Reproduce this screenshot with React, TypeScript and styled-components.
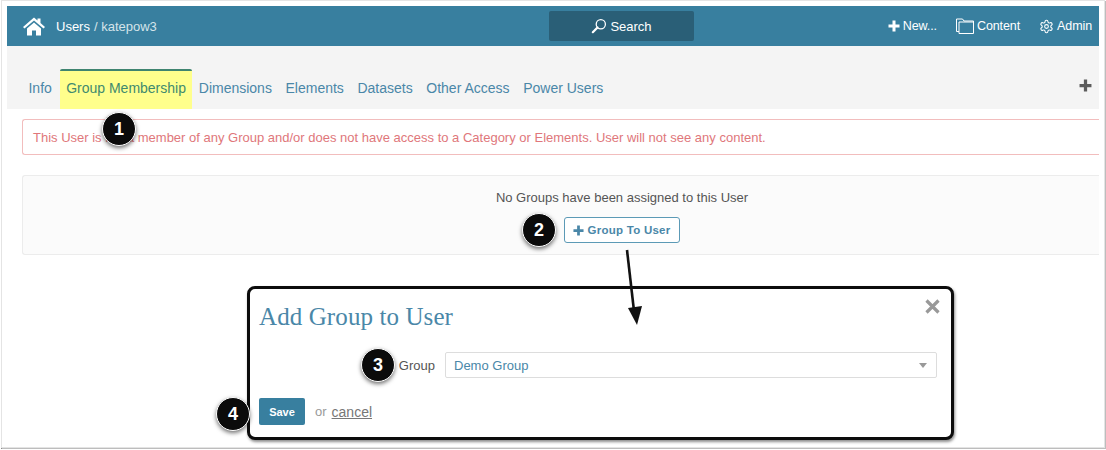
import React from "react";
import styled, { createGlobalStyle } from "styled-components";

const Global = createGlobalStyle`
  html, body { margin: 0; padding: 0; background: #fff; }
  body { font-family: "Liberation Sans", Arial, sans-serif; width: 1106px; height: 450px; overflow: hidden; }
`;
const Stage = styled.div`
  position: relative; width: 1106px; height: 450px; overflow: hidden; padding: 1px 0 0 2px; box-sizing: border-box;
`;
const Outer = styled.div`
  width: 1102px; height: 446px; box-sizing: border-box; padding: 5px 5px 0 5px; background: #fff;
  box-shadow: 0 0 0 1px #e4e4e4, 1px 1px 0 1px #bdbdbd, 0 1px 0 1px #8d8d8d;
`;
const Frame = styled.div`
  width: 1092px; height: 440px; background: #fff; overflow: hidden;
`;
const Header = styled.header`
  height: 40px; background: #387f9f; display: grid; grid-template-columns: 542px 145px 1fr; align-items: center; color: #fff;
`;
const Crumbs = styled.div`
  display: flex; align-items: center; padding-left: 16px; font-size: 13px; color: #fff;
`;
const Muted = styled.span`
  color: #d5e4ea; margin-left: 4px;
`;
const HomeIcon = styled.svg`
  width: 22px; height: 19px; margin-right: 11px; fill: #fff; flex: none;
`;
const SearchBtn = styled.div`
  height: 30px; width: 145px; border-radius: 2px; background: #2a5f77; display: flex; align-items: center; justify-content: center; gap: 3px; font-size: 13px; color: #fff;
`;
const Actions = styled.nav`
  display: flex; justify-content: flex-end; align-items: center; gap: 19px; padding-right: 7px; font-size: 12.5px; letter-spacing: -0.1px;
`;
const Action = styled.span`
  display: flex; align-items: center; gap: 3px; color: #fff;
`;
const TabStrip = styled.div`
  height: 63px; background: #f4f4f4; display: flex; align-items: flex-end; padding-left: 14.7px; box-sizing: border-box; position: relative;
`;
const Tab = styled.div<{ $active?: boolean }>`
  height: ${(p) => (p.$active ? "40px" : "37px")};
  padding: 0 ${(p) => (p.$active ? "6px" : "6.8px")} 5px;
  display: flex; align-items: center; font-size: 14px; box-sizing: border-box;
  color: ${(p) => (p.$active ? "#3f8a6f" : "#4a87a8")};
  background: ${(p) => (p.$active ? "#ffff8c" : "transparent")};
  border-top: ${(p) => (p.$active ? "2px solid #3f8470" : "none")};
  border-radius: 2px 2px 0 0;
  margin-left: ${(p) => (p.$active ? "1.5px" : "0")};
`;
const PlusCorner = styled.svg`
  position: absolute; right: 7px; top: 33px; width: 13px; height: 13px; fill: #5c5c5c;
`;
const Content = styled.main`
  padding: 10px 0 0 15px; display: flex; flex-direction: column;
`;
const Alert = styled.div`
  height: 36px; box-sizing: border-box; border: 1px solid #f2bdbd; border-right: none; border-radius: 3px 0 0 3px; display: flex; align-items: center; padding-left: 10px; font-size: 13px; color: #e0777b; background: #fff; white-space: nowrap;
`;
const Panel = styled.section`
  margin-top: 20px; height: 80px; box-sizing: border-box; border: 1px solid #ececec; border-right: none; border-radius: 3px 0 0 3px; background: #fbfbfb; display: flex; flex-direction: column; align-items: center; padding-top: 14px; gap: 12px;
`;
const PanelText = styled.div`
  font-size: 13px; color: #555; line-height: 15px; margin-left: 122px;
`;
const GroupBtn = styled.div`
  width: 116px; height: 26px; box-sizing: border-box; margin-left: 121px; border: 1px solid #5c9ab6; border-radius: 3px; background: #fff; display: flex; align-items: center; justify-content: center; gap: 4px; font-size: 11.5px; font-weight: 700; color: #4a87a8; letter-spacing: 0.25px;
`;
const Modal = styled.section`
  margin: 31px 0 0 225px; width: 707px; height: 154px; box-sizing: border-box; position: relative; border: 3px solid #0c0c0c; border-radius: 8px; background: #fff; padding: 13px 14px 0 9px; box-shadow: 1px 2px 3px rgba(0,0,0,0.45);
`;
const ModalTitle = styled.h2`
  margin: 0; font-family: "Liberation Serif", "DejaVu Serif", serif; font-weight: 400; font-size: 25px; line-height: 30px; color: #4a87a8; letter-spacing: 0.1px;
`;
const Close = styled.svg`
  position: absolute; right: 11px; top: 10px; width: 15px; height: 15px; stroke: #999; stroke-width: 3.2; fill: none;
`;
const FormRow = styled.div`
  display: flex; align-items: center; margin-top: 20px; justify-content: flex-end;
`;
const Label = styled.label`
  font-size: 13px; color: #555; margin-right: 10px;
`;
const Select = styled.div`
  width: 492px; height: 26px; box-sizing: border-box; border: 1px solid #ddd; border-radius: 2px; display: flex; align-items: center; justify-content: space-between; padding: 0 9px 0 8px; font-size: 13px; color: #4a87a8;
`;
const Caret = styled.i`
  width: 0; height: 0; border-left: 4.5px solid transparent; border-right: 4.5px solid transparent; border-top: 5px solid #999;
`;
const Footer = styled.div`
  display: flex; align-items: center; margin-top: 20px; font-size: 13px; color: #999;
`;
const SaveBtn = styled.div`
  width: 46px; height: 27px; border-radius: 2px; background: #387f9f; color: #fff; font-size: 11px; font-weight: 700; display: flex; align-items: center; justify-content: center; margin-right: 10px;
`;
const Cancel = styled.span`
  color: #777; text-decoration: underline; margin-left: 5px; font-size: 14px;
`;
const Badge = styled.div<{ $x: number; $y: number }>`
  position: absolute; left: ${(p) => p.$x}px; top: ${(p) => p.$y}px; width: 34px; height: 34px; box-sizing: border-box; border: 1.5px solid #fff; border-radius: 50%; background: #0b0b0b; color: #fff; font-size: 18px; font-weight: 700; display: flex; align-items: center; justify-content: center; box-shadow: 0 2px 4px rgba(0,0,0,0.55);
`;
const Arrow = styled.svg`
  position: absolute; left: 620px; top: 245px; width: 26px; height: 85px;
`;

function Plus({ size = 12, color = "#fff" }: { size?: number; color?: string }) {
  return (
    <svg width={size} height={size} viewBox="0 0 12 12" fill={color} style={{ flex: "none" }}>
      <path d="M4.5 0.5h3v4h4v3h-4v4h-3v-4h-4v-3h4z" />
    </svg>
  );
}

export default function App() {
  return (
    <Stage>
      <Global />
      <Outer>
        <Frame>
          <Header>
            <Crumbs>
              <HomeIcon viewBox="0 0 22 19">
                <path d="M11 0.5 L14.5 3.5 V1.5 H17.5 V6 L22 10 L20.5 11.5 L11 3.5 L1.5 11.5 L0 10 Z" />
                <path d="M4 11.5 L11 5.5 L18 11.5 V18.5 H13 V13.5 H9 V18.5 H4 Z" />
              </HomeIcon>
              Users <Muted>/ katepow3</Muted>
            </Crumbs>
            <SearchBtn>
              <svg width="16" height="16" viewBox="0 0 16 16" fill="none" stroke="#fff">
                <circle cx="9.8" cy="6.2" r="4.6" strokeWidth="1.3" />
                <path d="M6.5 9.5 L1.8 14.2" strokeWidth="2.2" strokeLinecap="round" />
              </svg>
              Search
            </SearchBtn>
            <Actions>
              <Action>
                <Plus />
                New...
              </Action>
              <Action>
                <svg width="18" height="16" viewBox="0 0 18 16" fill="none" stroke="#fff" strokeWidth="1">
                  <path d="M3 13.5 H0.5 V1 H6.5 L8 3 H17.5 V15.5 H3 V4 H17.5" />
                </svg>
                Content
              </Action>
              <Action>
                <svg width="15" height="15" viewBox="0 0 24 24" fill="none" stroke="#fff" strokeWidth="1.7" strokeLinecap="round" strokeLinejoin="round">
                  <path d="M12.22 2h-.44a2 2 0 0 0-2 2v.18a2 2 0 0 1-1 1.73l-.43.25a2 2 0 0 1-2 0l-.15-.08a2 2 0 0 0-2.73.73l-.22.38a2 2 0 0 0 .73 2.73l.15.1a2 2 0 0 1 1 1.72v.51a2 2 0 0 1-1 1.74l-.15.09a2 2 0 0 0-.73 2.73l.22.38a2 2 0 0 0 2.73.73l.15-.08a2 2 0 0 1 2 0l.43.25a2 2 0 0 1 1 1.73V20a2 2 0 0 0 2 2h.44a2 2 0 0 0 2-2v-.18a2 2 0 0 1 1-1.73l.43-.25a2 2 0 0 1 2 0l.15.08a2 2 0 0 0 2.73-.73l.22-.39a2 2 0 0 0-.73-2.73l-.15-.08a2 2 0 0 1-1-1.74v-.5a2 2 0 0 1 1-1.74l.15-.09a2 2 0 0 0 .73-2.73l-.22-.38a2 2 0 0 0-2.73-.73l-.15.08a2 2 0 0 1-2 0l-.43-.25a2 2 0 0 1-1-1.73V4a2 2 0 0 0-2-2z" />
                  <circle cx="12" cy="12" r="3" />
                </svg>
                Admin
              </Action>
            </Actions>
          </Header>
          <TabStrip>
            <Tab>Info</Tab>
            <Tab $active>Group Membership</Tab>
            <Tab>Dimensions</Tab>
            <Tab>Elements</Tab>
            <Tab>Datasets</Tab>
            <Tab>Other Access</Tab>
            <Tab>Power Users</Tab>
            <PlusCorner viewBox="0 0 12 12">
              <path d="M4.5 0.5h3v4h4v3h-4v4h-3v-4h-4v-3h4z" />
            </PlusCorner>
          </TabStrip>
          <Content>
            <Alert>This User is not a member of any Group and/or does not have access to a Category or Elements. User will not see any content.</Alert>
            <Panel>
              <PanelText>No Groups have been assigned to this User</PanelText>
              <GroupBtn>
                <Plus size={11} color="#4a87a8" />
                Group To User
              </GroupBtn>
            </Panel>
            <Modal>
              <ModalTitle>Add Group to User</ModalTitle>
              <Close viewBox="0 0 15 15">
                <path d="M1.5 1.5 L13.5 13.5 M13.5 1.5 L1.5 13.5" />
              </Close>
              <FormRow>
                <Label>Group</Label>
                <Select>
                  Demo Group
                  <Caret />
                </Select>
              </FormRow>
              <Footer>
                <SaveBtn>Save</SaveBtn>
                or
                <Cancel>cancel</Cancel>
              </Footer>
            </Modal>
          </Content>
        </Frame>
      </Outer>
      <Arrow viewBox="0 0 26 85">
        <path d="M7 5 L14 66" stroke="#111" strokeWidth="2.6" fill="none" />
        <path d="M8 63 L22 61 L17 80 Z" fill="#111" />
      </Arrow>
      <Badge $x={102} $y={112}>1</Badge>
      <Badge $x={522} $y={213}>2</Badge>
      <Badge $x={361} $y={348}>3</Badge>
      <Badge $x={216} $y={397}>4</Badge>
    </Stage>
  );
}
